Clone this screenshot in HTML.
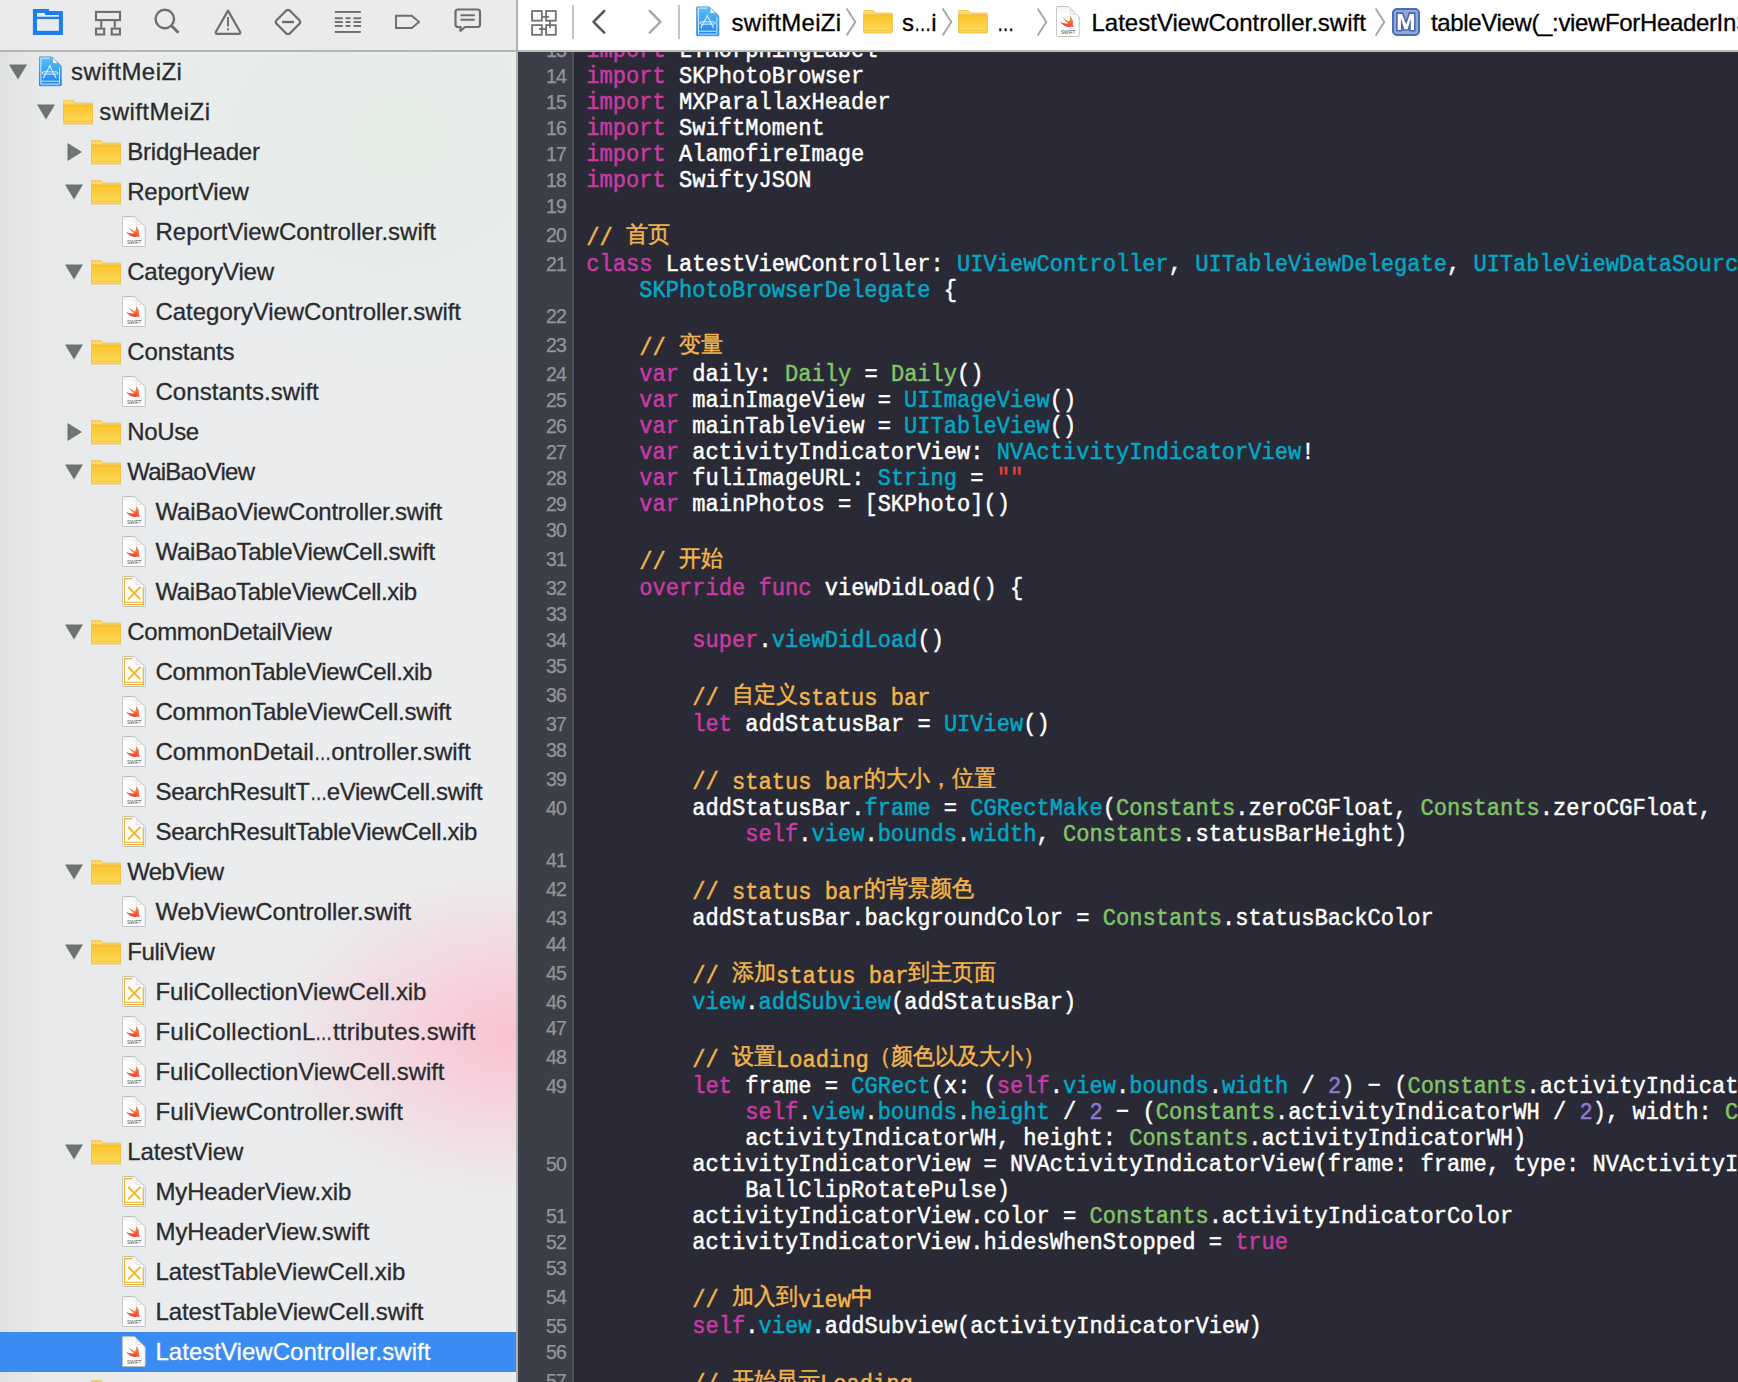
<!DOCTYPE html>
<html><head><meta charset="utf-8"><style>
*{margin:0;padding:0;box-sizing:border-box}
html,body{width:1738px;height:1382px;overflow:hidden;background:#e9ebeb}
body{position:relative;font-family:"Liberation Sans",sans-serif}
.ic{position:absolute;overflow:visible}
#side{position:absolute;left:0;top:0;width:516px;height:1382px;overflow:hidden;
 background:
  radial-gradient(ellipse 250px 168px at 515px 1035px, rgba(255,186,204,0.85), rgba(255,186,204,0.4) 50%, rgba(255,186,204,0) 100%),
  radial-gradient(ellipse 260px 220px at 400px 140px, rgba(214,236,210,0.3), rgba(214,236,210,0) 100%),
  linear-gradient(90deg,#dfe1e2 0px,#e7e9eb 40px,#eaecee 200px,#ebedef 516px);}
#tb{position:absolute;left:0;top:0;width:516px;height:50px;background:#eaebed}
#sideline{position:absolute;left:0;top:50px;width:518px;height:2px;background:#b4b4b4}
#vdiv{position:absolute;left:516px;top:0;width:2px;height:1382px;background:#b1b1b1}
.sel{position:absolute;left:0;width:516px;height:40px;background:#3a8cf2}
.sn{position:absolute;font-size:24px;line-height:0;color:#2b2b2e;white-space:nowrap;letter-spacing:-0.1px;-webkit-text-stroke:0.3px}
.sw{color:#fff}
#jb{position:absolute;left:518px;top:0;width:1220px;height:50px;background:#fff}
#jb .ic, #jb .jt, #jb .vsep{margin-left:-518px}
.vsep{position:absolute;top:5px;width:2px;height:34px;background:#c4c4c4}
.jt{position:absolute;top:22.5px;font-size:24px;line-height:0;color:#000;white-space:nowrap;-webkit-text-stroke:0.3px}
.el{display:inline-block;transform:scaleX(0.72);transform-origin:0 0;margin-right:-6.7px}
.chev{top:8px;width:12px;height:28px}
#jbline{position:absolute;left:518px;top:50px;width:1220px;height:2px;background:#b9b9b9}
#ed{position:absolute;left:518px;top:52px;width:1220px;height:1330px;background:#292a35;overflow:hidden}
#gut{position:absolute;left:0;top:0;width:54px;height:100%;background:#3d3f48}
#gutb{position:absolute;left:54px;top:0;width:2px;height:100%;background:#50525a}
.cl, .ln{position:absolute;line-height:0;white-space:pre}
.cl{font-family:"Liberation Mono",monospace;font-size:22.07px;color:#fff;transform:scaleY(1.12);transform-origin:0 5px;-webkit-text-stroke:0.45px}
.cj{display:inline-block;transform:translateY(-2.6px) scaleY(0.93);transform-origin:0 4px}
.ln{right:1172px;font-size:19.5px;color:#949599;text-align:right;letter-spacing:-0.9px;-webkit-text-stroke:0.25px}
</style></head>
<body>

<svg width="0" height="0" style="position:absolute">
<defs>
 <linearGradient id="fg" x1="0" y1="0" x2="0" y2="1">
  <stop offset="0" stop-color="#fcc52a"/><stop offset="1" stop-color="#fed95e"/>
 </linearGradient>
 <linearGradient id="pg" x1="0" y1="0" x2="0" y2="1">
  <stop offset="0" stop-color="#5cc0f2"/><stop offset="1" stop-color="#1883f2"/>
 </linearGradient>
 <linearGradient id="bg" x1="0.3" y1="0" x2="0.1" y2="1">
  <stop offset="0" stop-color="#f9a044"/><stop offset="1" stop-color="#f42c2a"/>
 </linearGradient>
 <symbol id="foldic" viewBox="0 0 30 25">
  <path d="M1,0.3 H9.6 Q10.3,0.3 10.7,0.9 L11.8,3 H28.9 Q29.8,3 29.8,4 V22.9 Q29.8,23.8 28.9,23.8 H1 Q0.1,23.8 0.1,22.9 V1.2 Q0.1,0.3 1,0.3 Z" fill="#fdd865" stroke="#ebb63c" stroke-width="0.6"/>
  <rect x="0.1" y="5" width="29.7" height="18.8" rx="0.9" fill="url(#fg)" stroke="#e9b030" stroke-width="0.6"/>
  <rect x="0.6" y="20.9" width="28.7" height="0.6" fill="#efbc38"/>
 </symbol>
 <linearGradient id="pageg" x1="0" y1="0" x2="0" y2="1">
  <stop offset="0" stop-color="#f1f1f1"/><stop offset="0.25" stop-color="#fefefe"/><stop offset="1" stop-color="#ffffff"/>
 </linearGradient>
 <symbol id="page" viewBox="0 0 24 31">
  <path d="M1.2,31 H22.8" stroke="#000" stroke-opacity="0.12" stroke-width="1"/>
  <path d="M1.3,0.5 H12.6 L23.2,10.9 V29.6 Q23.2,30.5 22.3,30.5 H1.3 Q0.4,30.5 0.4,29.6 V1.4 Q0.4,0.5 1.3,0.5 Z" fill="url(#pageg)" stroke="#b9bbbd" stroke-width="0.9"/>
  <path d="M14.2,3.6 V8.4 H19 Z" fill="#fbfbfb" stroke="#cfcfcf" stroke-width="0.6" stroke-linejoin="round"/>
 </symbol>
 <symbol id="swiftic" viewBox="0 0 24 31">
  <use href="#page"/>
  <path d="M13.6,9 C16.6,12 17.6,16 16.7,19 C17.4,19.8 17.9,20.5 17.8,21.2 C16.9,20.6 15.9,20.4 14.7,20.8 C11,22 6.5,19.5 3.9,15.6 C6.6,17.5 10.1,18 12.3,17.2 C9.9,15.5 7.6,13 5.9,10.8 C8.1,12.8 10.6,14.5 12.9,15.6 C14.3,13.8 14.6,11.5 13.6,9 Z" fill="url(#bg)"/>
  <text x="12.2" y="28.1" font-family="Liberation Sans" font-size="5.4" text-anchor="middle" fill="#4a4a4a" textLength="14.6" lengthAdjust="spacingAndGlyphs">SWIFT</text>
 </symbol>
 <symbol id="xibic" viewBox="0 0 24 31">
  <use href="#page"/>
  <path d="M10.4,2.5 H2.5 V28.5 H21.3 V11.2" fill="none" stroke="#efb331" stroke-width="1.25"/>
  <path d="M2.5,26.3 H21.3" fill="none" stroke="#efb331" stroke-width="1.1"/>
  <path d="M6.8,11.5 L17.6,22.6 M17.8,11.5 L6.6,22.8" stroke="#f4b526" stroke-width="1.9" stroke-linecap="round"/>
 </symbol>
 <symbol id="projic" viewBox="0 0 23 31">
  <path d="M1,0.8 H11.5 Q12.6,0.8 13.5,1.6 L21.3,8.8 Q22.4,9.8 22.4,11.2 V28.8 Q22.4,29.8 21.4,29.8 H1 Q0,29.8 0,28.8 V1.8 Q0,0.8 1,0.8 Z" fill="url(#pg)" stroke="#2f8fd8" stroke-width="0.6"/>
  <path d="M14.1,2.3 V6.9 H18.4 Z" fill="#ffffff"/>
  <path d="M10.8,2.1 H1.9 V28.1 H20.4 V11.2" fill="none" stroke="#eaf5ff" stroke-width="0.9"/>
  <path d="M1.9,25.2 H20.4" fill="none" stroke="#eaf5ff" stroke-width="0.9"/>
  <path d="M4.4,22.1 L10.8,9.9 L17.1,22.1" fill="none" stroke="#f4faff" stroke-width="1.2" stroke-dasharray="2.2 0.5"/>
  <rect x="3.4" y="15.8" width="15.2" height="2.3" rx="1.1" fill="none" stroke="#f4faff" stroke-width="0.9"/>
 </symbol>
 <symbol id="swiftbig" viewBox="0 0 24 31">
  <use href="#swiftic"/>
 </symbol>
</defs>
</svg>

<div id="side">
<svg class="ic" style="left:9px;top:64px" width="18" height="16"><path d="M0,0.5 H18 L9,15.5 Z" fill="#707471"/></svg><svg class="ic" style="left:39px;top:56px" width="23" height="31"><use href="#projic"/></svg><div class="sn" style="left:71.1px;top:72px;letter-spacing:0.46px">swiftMeiZi</div><svg class="ic" style="left:37px;top:104px" width="18" height="16"><path d="M0,0.5 H18 L9,15.5 Z" fill="#707471"/></svg><svg class="ic" style="left:63px;top:100px" width="30" height="25"><use href="#foldic"/></svg><div class="sn" style="left:99.2px;top:112px;letter-spacing:0.46px">swiftMeiZi</div><svg class="ic" style="left:67px;top:143px" width="16" height="18"><path d="M0.5,0 V18 L15,9 Z" fill="#707471"/></svg><svg class="ic" style="left:91px;top:140px" width="30" height="25"><use href="#foldic"/></svg><div class="sn" style="left:127.19999999999999px;top:152px;letter-spacing:-0.20px">BridgHeader</div><svg class="ic" style="left:65px;top:184px" width="18" height="16"><path d="M0,0.5 H18 L9,15.5 Z" fill="#707471"/></svg><svg class="ic" style="left:91px;top:180px" width="30" height="25"><use href="#foldic"/></svg><div class="sn" style="left:127.19999999999999px;top:192px;letter-spacing:-0.21px">ReportView</div><svg class="ic" style="left:122px;top:216px" width="24" height="31"><use href="#swiftic"/></svg><div class="sn" style="left:155.5px;top:232px;letter-spacing:-0.02px">ReportViewController.swift</div><svg class="ic" style="left:65px;top:264px" width="18" height="16"><path d="M0,0.5 H18 L9,15.5 Z" fill="#707471"/></svg><svg class="ic" style="left:91px;top:260px" width="30" height="25"><use href="#foldic"/></svg><div class="sn" style="left:127.19999999999999px;top:272px;letter-spacing:-0.19px">CategoryView</div><svg class="ic" style="left:122px;top:296px" width="24" height="31"><use href="#swiftic"/></svg><div class="sn" style="left:155.5px;top:312px;letter-spacing:-0.03px">CategoryViewController.swift</div><svg class="ic" style="left:65px;top:344px" width="18" height="16"><path d="M0,0.5 H18 L9,15.5 Z" fill="#707471"/></svg><svg class="ic" style="left:91px;top:340px" width="30" height="25"><use href="#foldic"/></svg><div class="sn" style="left:127.19999999999999px;top:352px;letter-spacing:-0.10px">Constants</div><svg class="ic" style="left:122px;top:376px" width="24" height="31"><use href="#swiftic"/></svg><div class="sn" style="left:155.5px;top:392px;letter-spacing:0.04px">Constants.swift</div><svg class="ic" style="left:67px;top:423px" width="16" height="18"><path d="M0.5,0 V18 L15,9 Z" fill="#707471"/></svg><svg class="ic" style="left:91px;top:420px" width="30" height="25"><use href="#foldic"/></svg><div class="sn" style="left:127.19999999999999px;top:432px;letter-spacing:-0.35px">NoUse</div><svg class="ic" style="left:65px;top:464px" width="18" height="16"><path d="M0,0.5 H18 L9,15.5 Z" fill="#707471"/></svg><svg class="ic" style="left:91px;top:460px" width="30" height="25"><use href="#foldic"/></svg><div class="sn" style="left:127.19999999999999px;top:472px;letter-spacing:-0.77px">WaiBaoView</div><svg class="ic" style="left:122px;top:496px" width="24" height="31"><use href="#swiftic"/></svg><div class="sn" style="left:155.5px;top:512px;letter-spacing:-0.22px">WaiBaoViewController.swift</div><svg class="ic" style="left:122px;top:536px" width="24" height="31"><use href="#swiftic"/></svg><div class="sn" style="left:155.5px;top:552px;letter-spacing:-0.35px">WaiBaoTableViewCell.swift</div><svg class="ic" style="left:122px;top:576px" width="24" height="31"><use href="#xibic"/></svg><div class="sn" style="left:155.5px;top:592px;letter-spacing:-0.42px">WaiBaoTableViewCell.xib</div><svg class="ic" style="left:65px;top:624px" width="18" height="16"><path d="M0,0.5 H18 L9,15.5 Z" fill="#707471"/></svg><svg class="ic" style="left:91px;top:620px" width="30" height="25"><use href="#foldic"/></svg><div class="sn" style="left:127.19999999999999px;top:632px;letter-spacing:-0.37px">CommonDetailView</div><svg class="ic" style="left:122px;top:656px" width="24" height="31"><use href="#xibic"/></svg><div class="sn" style="left:155.5px;top:672px;letter-spacing:-0.37px">CommonTableViewCell.xib</div><svg class="ic" style="left:122px;top:696px" width="24" height="31"><use href="#swiftic"/></svg><div class="sn" style="left:155.5px;top:712px;letter-spacing:-0.27px">CommonTableViewCell.swift</div><svg class="ic" style="left:122px;top:736px" width="24" height="31"><use href="#swiftic"/></svg><div class="sn" style="left:155.5px;top:752px;letter-spacing:-0.03px">CommonDetail<span class="el">…</span>ontroller.swift</div><svg class="ic" style="left:122px;top:776px" width="24" height="31"><use href="#swiftic"/></svg><div class="sn" style="left:155.5px;top:792px;letter-spacing:-0.35px">SearchResultT<span class="el">…</span>eViewCell.swift</div><svg class="ic" style="left:122px;top:816px" width="24" height="31"><use href="#xibic"/></svg><div class="sn" style="left:155.5px;top:832px;letter-spacing:-0.35px">SearchResultTableViewCell.xib</div><svg class="ic" style="left:65px;top:864px" width="18" height="16"><path d="M0,0.5 H18 L9,15.5 Z" fill="#707471"/></svg><svg class="ic" style="left:91px;top:860px" width="30" height="25"><use href="#foldic"/></svg><div class="sn" style="left:127.19999999999999px;top:872px;letter-spacing:-0.60px">WebView</div><svg class="ic" style="left:122px;top:896px" width="24" height="31"><use href="#swiftic"/></svg><div class="sn" style="left:155.5px;top:912px;letter-spacing:-0.10px">WebViewController.swift</div><svg class="ic" style="left:65px;top:944px" width="18" height="16"><path d="M0,0.5 H18 L9,15.5 Z" fill="#707471"/></svg><svg class="ic" style="left:91px;top:940px" width="30" height="25"><use href="#foldic"/></svg><div class="sn" style="left:127.19999999999999px;top:952px;letter-spacing:-0.39px">FuliView</div><svg class="ic" style="left:122px;top:976px" width="24" height="31"><use href="#xibic"/></svg><div class="sn" style="left:155.5px;top:992px;letter-spacing:-0.14px">FuliCollectionViewCell.xib</div><svg class="ic" style="left:122px;top:1016px" width="24" height="31"><use href="#swiftic"/></svg><div class="sn" style="left:155.5px;top:1032px;letter-spacing:0.17px">FuliCollectionL<span class="el">…</span>ttributes.swift</div><svg class="ic" style="left:122px;top:1056px" width="24" height="31"><use href="#swiftic"/></svg><div class="sn" style="left:155.5px;top:1072px;letter-spacing:-0.10px">FuliCollectionViewCell.swift</div><svg class="ic" style="left:122px;top:1096px" width="24" height="31"><use href="#swiftic"/></svg><div class="sn" style="left:155.5px;top:1112px;letter-spacing:-0.01px">FuliViewController.swift</div><svg class="ic" style="left:65px;top:1144px" width="18" height="16"><path d="M0,0.5 H18 L9,15.5 Z" fill="#707471"/></svg><svg class="ic" style="left:91px;top:1140px" width="30" height="25"><use href="#foldic"/></svg><div class="sn" style="left:127.19999999999999px;top:1152px;letter-spacing:-0.10px">LatestView</div><svg class="ic" style="left:122px;top:1176px" width="24" height="31"><use href="#xibic"/></svg><div class="sn" style="left:155.5px;top:1192px;letter-spacing:-0.17px">MyHeaderView.xib</div><svg class="ic" style="left:122px;top:1216px" width="24" height="31"><use href="#swiftic"/></svg><div class="sn" style="left:155.5px;top:1232px;letter-spacing:-0.10px">MyHeaderView.swift</div><svg class="ic" style="left:122px;top:1256px" width="24" height="31"><use href="#xibic"/></svg><div class="sn" style="left:155.5px;top:1272px;letter-spacing:-0.15px">LatestTableViewCell.xib</div><svg class="ic" style="left:122px;top:1296px" width="24" height="31"><use href="#swiftic"/></svg><div class="sn" style="left:155.5px;top:1312px;letter-spacing:-0.10px">LatestTableViewCell.swift</div><div class="sel" style="top:1332px"></div><svg class="ic" style="left:122px;top:1336px" width="24" height="31"><use href="#swiftic"/></svg><div class="sn sw" style="left:155.5px;top:1352px;letter-spacing:0.02px">LatestViewController.swift</div><svg class="ic" style="left:65px;top:1384px" width="18" height="16"><path d="M0,0.5 H18 L9,15.5 Z" fill="#707471"/></svg><svg class="ic" style="left:91px;top:1380px" width="30" height="25"><use href="#foldic"/></svg><div class="sn" style="left:127.19999999999999px;top:1392px;letter-spacing:-0.10px">Resources</div>
</div>

<div id="tb">
 <svg class="ic" style="left:32px;top:8px" width="32" height="28" viewBox="0 0 32 28">
  <path d="M0.9,0.95 H16.96 V3 H30.9 V26.9 H0.9 Z" fill="#1d7df2"/>
  <path d="M5,5 H12.9 V6.9 H26.9 V8.8 H5 Z" fill="#eaebed"/>
  <rect x="5" y="11.1" width="21.9" height="11.7" fill="#eaebed"/>
 </svg>
 <svg class="ic" style="left:94px;top:10px" width="28" height="26" viewBox="0 0 28 26">
  <g fill="none" stroke="#6e6e6e" stroke-width="2.1">
   <rect x="2" y="1.9" width="24" height="8.2"/>
   <path d="M7.2,10 V17.6 M20.8,10 V17.6"/>
   <rect x="2" y="18.6" width="8.2" height="5.9"/>
   <rect x="17.7" y="18.6" width="8.2" height="5.9"/>
  </g>
 </svg>
 <svg class="ic" style="left:154px;top:8px" width="27" height="27" viewBox="0 0 27 27">
  <g fill="none" stroke="#6e6e6e" stroke-width="2.4">
   <circle cx="10.8" cy="11" r="9.2"/>
   <path d="M17.5,17.8 L24.5,24.8" stroke-width="2.8"/>
  </g>
 </svg>
 <svg class="ic" style="left:214px;top:8px" width="28" height="28" viewBox="0 0 28 28">
  <path d="M14,2.6 L26.2,24 Q26.6,25.8 25,25.8 H3 Q1.4,25.8 1.8,24 Z" fill="none" stroke="#6e6e6e" stroke-width="2.2" stroke-linejoin="round"/>
  <path d="M14,9 V18.5" stroke="#6e6e6e" stroke-width="1.9"/>
  <rect x="13" y="20.4" width="2" height="2" fill="#6e6e6e"/>
 </svg>
 <svg class="ic" style="left:274px;top:8px" width="28" height="28" viewBox="0 0 28 28">
  <path d="M14,1.8 Q15,1.8 16,2.8 L25.2,12 Q26.2,13 26.2,14 Q26.2,15 25.2,16 L16,25.2 Q15,26.2 14,26.2 Q13,26.2 12,25.2 L2.8,16 Q1.8,15 1.8,14 Q1.8,13 2.8,12 L12,2.8 Q13,1.8 14,1.8 Z" fill="none" stroke="#6e6e6e" stroke-width="2.3"/>
  <path d="M8,14 H20" stroke="#6e6e6e" stroke-width="2.4"/>
 </svg>
 <svg class="ic" style="left:334px;top:10px" width="28" height="24" viewBox="0 0 28 24">
  <g fill="#6e6e6e">
   <rect x="0.8" y="1" width="26" height="1.9"/>
   <rect x="0.8" y="21" width="26" height="1.9"/>
   <rect x="0.8" y="7.3" width="8" height="1.9"/><rect x="11.6" y="7.3" width="4.9" height="1.9"/><rect x="19.5" y="7.3" width="7.6" height="1.9"/>
   <rect x="0.8" y="11.1" width="8" height="1.9"/><rect x="11.6" y="11.1" width="4.9" height="1.9"/><rect x="19.5" y="11.1" width="7.6" height="1.9"/>
   <rect x="0.8" y="15" width="8" height="1.9"/><rect x="11.6" y="15" width="4.9" height="1.9"/><rect x="19.5" y="15" width="7.6" height="1.9"/>
  </g>
 </svg>
 <svg class="ic" style="left:394px;top:14px" width="28" height="16" viewBox="0 0 28 16">
  <path d="M2,1.8 H17.8 L25,7.9 L17.8,14 H2 Z" fill="none" stroke="#6e6e6e" stroke-width="1.9"/>
 </svg>
 <svg class="ic" style="left:454px;top:8px" width="28" height="26" viewBox="0 0 28 26">
  <path d="M4,1.5 H23.5 Q26,1.5 26,4 V16.5 Q26,19 23.5,19 H11 L6.5,22.8 V19 H4 Q1.5,19 1.5,16.5 V4 Q1.5,1.5 4,1.5 Z" fill="none" stroke="#6e6e6e" stroke-width="2.2" stroke-linejoin="round"/>
  <path d="M6.5,7.2 H20.8 M6.5,11.8 H20.8" stroke="#6e6e6e" stroke-width="2"/>
 </svg>
</div>

<div id="sideline"></div>
<div id="vdiv"></div>

<div id="jb">
 <svg class="ic" style="left:530px;top:10px" width="28" height="27" viewBox="0 0 28 27">
  <g fill="none" stroke="#727272" stroke-width="1.8">
   <rect x="2.1" y="1" width="9.7" height="9.7"/><rect x="16.1" y="1" width="9.7" height="9.7"/>
   <rect x="2.1" y="15.1" width="9.7" height="9.7"/><rect x="16.1" y="15.1" width="9.7" height="9.7"/>
   <path d="M11.8,6.8 H19 M20,10.7 V17.9 M16.1,19 H9.1"/>
  </g>
 </svg>
 <div class="vsep" style="left:572px"></div>
 <svg class="ic" style="left:589px;top:9px" width="20" height="26" viewBox="0 0 20 26">
  <path d="M15.2,2 L4.5,12.8 L15.2,23.6" fill="none" stroke="#555" stroke-width="2.5" stroke-linecap="round" stroke-linejoin="round"/>
 </svg>
 <svg class="ic" style="left:646px;top:9px" width="20" height="26" viewBox="0 0 20 26">
  <path d="M3.8,2 L14.5,12.8 L3.8,23.6" fill="none" stroke="#aaa" stroke-width="2.5" stroke-linecap="round" stroke-linejoin="round"/>
 </svg>
 <div class="vsep" style="left:678px"></div>
 <svg class="ic" style="left:696px;top:6px" width="24" height="31"><use href="#projic"/></svg>
 <div class="jt" style="left:731.5px;letter-spacing:0.33px">swiftMeiZi</div>
 <svg class="ic chev" style="left:845px"><path d="M1.6,0.6 L10.3,14 L1.6,27.4" fill="none" stroke="#a6a6a6" stroke-width="1.9"/></svg>
 <svg class="ic" style="left:863px;top:10px" width="30" height="24"><use href="#foldic"/></svg>
 <div class="jt" style="left:902px">s<span class="el">…</span>i</div>
 <svg class="ic chev" style="left:941px"><path d="M1.6,0.6 L10.3,14 L1.6,27.4" fill="none" stroke="#a6a6a6" stroke-width="1.9"/></svg>
 <svg class="ic" style="left:958px;top:10px" width="30" height="24"><use href="#foldic"/></svg>
 <div class="jt" style="left:997px"><span class="el">…</span></div>
 <svg class="ic chev" style="left:1036px"><path d="M1.6,0.6 L10.3,14 L1.6,27.4" fill="none" stroke="#a6a6a6" stroke-width="1.9"/></svg>
 <svg class="ic" style="left:1056px;top:6px" width="24" height="31"><use href="#swiftic"/></svg>
 <div class="jt" style="left:1091.5px">LatestViewController.swift</div>
 <svg class="ic chev" style="left:1374px"><path d="M1.6,0.6 L10.3,14 L1.6,27.4" fill="none" stroke="#a6a6a6" stroke-width="1.9"/></svg>
 <svg class="ic" style="left:1392px;top:8px" width="28" height="28" viewBox="0 0 28 28">
  <rect x="1" y="1" width="26" height="26" rx="4" fill="#94a8d6" stroke="#4870b8" stroke-width="2"/>
  <path d="M5.75,22 V5.9 H10.1 L14.2,16.6 L17.9,5.9 H22 V22 H18.8 V10.2 L15.6,21.2 H12.4 L8.9,10.2 V22 Z" fill="#fff" stroke="#4e66b0" stroke-width="3.2" paint-order="stroke" stroke-linejoin="miter"/>
 </svg>
 <div class="jt" style="left:1431px;letter-spacing:-0.35px">tableView(_:viewForHeaderInSection:)</div>
</div>

<div id="jbline"></div>
<div id="ed">
 <div id="gut"></div><div id="gutb"></div>
 <div class="ln" style="top:-2px">13</div><div class="ln" style="top:24px">14</div><div class="ln" style="top:50px">15</div><div class="ln" style="top:76px">16</div><div class="ln" style="top:102px">17</div><div class="ln" style="top:128px">18</div><div class="ln" style="top:154px">19</div><div class="ln" style="top:183px">20</div><div class="ln" style="top:212px">21</div><div class="ln" style="top:264px">22</div><div class="ln" style="top:293px">23</div><div class="ln" style="top:322px">24</div><div class="ln" style="top:348px">25</div><div class="ln" style="top:374px">26</div><div class="ln" style="top:400px">27</div><div class="ln" style="top:426px">28</div><div class="ln" style="top:452px">29</div><div class="ln" style="top:478px">30</div><div class="ln" style="top:507px">31</div><div class="ln" style="top:536px">32</div><div class="ln" style="top:562px">33</div><div class="ln" style="top:588px">34</div><div class="ln" style="top:614px">35</div><div class="ln" style="top:643px">36</div><div class="ln" style="top:672px">37</div><div class="ln" style="top:698px">38</div><div class="ln" style="top:727px">39</div><div class="ln" style="top:756px">40</div><div class="ln" style="top:808px">41</div><div class="ln" style="top:837px">42</div><div class="ln" style="top:866px">43</div><div class="ln" style="top:892px">44</div><div class="ln" style="top:921px">45</div><div class="ln" style="top:950px">46</div><div class="ln" style="top:976px">47</div><div class="ln" style="top:1005px">48</div><div class="ln" style="top:1034px">49</div><div class="ln" style="top:1112px">50</div><div class="ln" style="top:1164px">51</div><div class="ln" style="top:1190px">52</div><div class="ln" style="top:1216px">53</div><div class="ln" style="top:1245px">54</div><div class="ln" style="top:1274px">55</div><div class="ln" style="top:1300px">56</div><div class="ln" style="top:1329px">57</div>
 <div class="cl" style="top:-0.5px;left:68.3px"><span style="color:#c93aa3">import</span> LTMorphingLabel</div><div class="cl" style="top:25.5px;left:68.3px"><span style="color:#c93aa3">import</span> SKPhotoBrowser</div><div class="cl" style="top:51.5px;left:68.3px"><span style="color:#c93aa3">import</span> MXParallaxHeader</div><div class="cl" style="top:77.5px;left:68.3px"><span style="color:#c93aa3">import</span> SwiftMoment</div><div class="cl" style="top:103.5px;left:68.3px"><span style="color:#c93aa3">import</span> AlamofireImage</div><div class="cl" style="top:129.5px;left:68.3px"><span style="color:#c93aa3">import</span> SwiftyJSON</div><div class="cl" style="top:155.5px;left:68.3px"></div><div class="cl" style="top:188px;left:68.3px"><span style="color:#f2b44c">// <span class="cj">首页</span></span></div><div class="cl" style="top:213.5px;left:68.3px"><span style="color:#c93aa3">class</span> LatestViewController: <span style="color:#00a9c6">UIViewController</span>, <span style="color:#00a9c6">UITableViewDelegate</span>, <span style="color:#00a9c6">UITableViewDataSource</span>,</div><div class="cl" style="top:239.5px;left:121.3px"><span style="color:#00a9c6">SKPhotoBrowserDelegate</span> {</div><div class="cl" style="top:265.5px;left:68.3px"></div><div class="cl" style="top:298px;left:121.3px"><span style="color:#f2b44c">// <span class="cj">变量</span></span></div><div class="cl" style="top:323.5px;left:121.3px"><span style="color:#c93aa3">var</span> daily: <span style="color:#83c36a">Daily</span> = <span style="color:#83c36a">Daily</span>()</div><div class="cl" style="top:349.5px;left:121.3px"><span style="color:#c93aa3">var</span> mainImageView = <span style="color:#00a9c6">UIImageView</span>()</div><div class="cl" style="top:375.5px;left:121.3px"><span style="color:#c93aa3">var</span> mainTableView = <span style="color:#00a9c6">UITableView</span>()</div><div class="cl" style="top:401.5px;left:121.3px"><span style="color:#c93aa3">var</span> activityIndicatorView: <span style="color:#00a9c6">NVActivityIndicatorView</span>!</div><div class="cl" style="top:427.5px;left:121.3px"><span style="color:#c93aa3">var</span> fuliImageURL: <span style="color:#00a9c6">String</span> = <span style="color:#e9413c">&quot;&quot;</span></div><div class="cl" style="top:453.5px;left:121.3px"><span style="color:#c93aa3">var</span> mainPhotos = [SKPhoto]()</div><div class="cl" style="top:479.5px;left:68.3px"></div><div class="cl" style="top:512px;left:121.3px"><span style="color:#f2b44c">// <span class="cj">开始</span></span></div><div class="cl" style="top:537.5px;left:121.3px"><span style="color:#c93aa3">override</span> <span style="color:#c93aa3">func</span> viewDidLoad() {</div><div class="cl" style="top:563.5px;left:68.3px"></div><div class="cl" style="top:589.5px;left:174.3px"><span style="color:#c93aa3">super</span>.<span style="color:#00a9c6">viewDidLoad</span>()</div><div class="cl" style="top:615.5px;left:68.3px"></div><div class="cl" style="top:648px;left:174.3px"><span style="color:#f2b44c">// <span class="cj">自定义</span>status bar</span></div><div class="cl" style="top:673.5px;left:174.3px"><span style="color:#c93aa3">let</span> addStatusBar = <span style="color:#00a9c6">UIView</span>()</div><div class="cl" style="top:699.5px;left:68.3px"></div><div class="cl" style="top:732px;left:174.3px"><span style="color:#f2b44c">// status bar<span class="cj">的大小，位置</span></span></div><div class="cl" style="top:757.5px;left:174.3px">addStatusBar.<span style="color:#00a9c6">frame</span> = <span style="color:#00a9c6">CGRectMake</span>(<span style="color:#83c36a">Constants</span>.zeroCGFloat, <span style="color:#83c36a">Constants</span>.zeroCGFloat,</div><div class="cl" style="top:783.5px;left:227.2px"><span style="color:#c93aa3">self</span>.<span style="color:#00a9c6">view</span>.<span style="color:#00a9c6">bounds</span>.<span style="color:#00a9c6">width</span>, <span style="color:#83c36a">Constants</span>.statusBarHeight)</div><div class="cl" style="top:809.5px;left:68.3px"></div><div class="cl" style="top:842px;left:174.3px"><span style="color:#f2b44c">// status bar<span class="cj">的背景颜色</span></span></div><div class="cl" style="top:867.5px;left:174.3px">addStatusBar.backgroundColor = <span style="color:#83c36a">Constants</span>.statusBackColor</div><div class="cl" style="top:893.5px;left:68.3px"></div><div class="cl" style="top:926px;left:174.3px"><span style="color:#f2b44c">// <span class="cj">添加</span>status bar<span class="cj">到主页面</span></span></div><div class="cl" style="top:951.5px;left:174.3px"><span style="color:#00a9c6">view</span>.<span style="color:#00a9c6">addSubview</span>(addStatusBar)</div><div class="cl" style="top:977.5px;left:68.3px"></div><div class="cl" style="top:1010px;left:174.3px"><span style="color:#f2b44c">// <span class="cj">设置</span>Loading<span class="cj">（颜色以及大小）</span></span></div><div class="cl" style="top:1035.5px;left:174.3px"><span style="color:#c93aa3">let</span> frame = <span style="color:#00a9c6">CGRect</span>(x: (<span style="color:#c93aa3">self</span>.<span style="color:#00a9c6">view</span>.<span style="color:#00a9c6">bounds</span>.<span style="color:#00a9c6">width</span> / <span style="color:#8c7ad6">2</span>) − (<span style="color:#83c36a">Constants</span>.activityIndicatorWH / <span style="color:#8c7ad6">2</span>), y: (</div><div class="cl" style="top:1061.5px;left:227.2px"><span style="color:#c93aa3">self</span>.<span style="color:#00a9c6">view</span>.<span style="color:#00a9c6">bounds</span>.<span style="color:#00a9c6">height</span> / <span style="color:#8c7ad6">2</span> − (<span style="color:#83c36a">Constants</span>.activityIndicatorWH / <span style="color:#8c7ad6">2</span>), width: <span style="color:#83c36a">Constants</span>.</div><div class="cl" style="top:1087.5px;left:227.2px">activityIndicatorWH, height: <span style="color:#83c36a">Constants</span>.activityIndicatorWH)</div><div class="cl" style="top:1113.5px;left:174.3px">activityIndicatorView = NVActivityIndicatorView(frame: frame, type: NVActivityIndicatorType.</div><div class="cl" style="top:1139.5px;left:227.2px">BallClipRotatePulse)</div><div class="cl" style="top:1165.5px;left:174.3px">activityIndicatorView.color = <span style="color:#83c36a">Constants</span>.activityIndicatorColor</div><div class="cl" style="top:1191.5px;left:174.3px">activityIndicatorView.hidesWhenStopped = <span style="color:#c93aa3">true</span></div><div class="cl" style="top:1217.5px;left:68.3px"></div><div class="cl" style="top:1250px;left:174.3px"><span style="color:#f2b44c">// <span class="cj">加入到</span>view<span class="cj">中</span></span></div><div class="cl" style="top:1275.5px;left:174.3px"><span style="color:#c93aa3">self</span>.<span style="color:#00a9c6">view</span>.addSubview(activityIndicatorView)</div><div class="cl" style="top:1301.5px;left:68.3px"></div><div class="cl" style="top:1334px;left:174.3px"><span style="color:#f2b44c">// <span class="cj">开始显示</span>Loading</span></div>
</div>
</body></html>
